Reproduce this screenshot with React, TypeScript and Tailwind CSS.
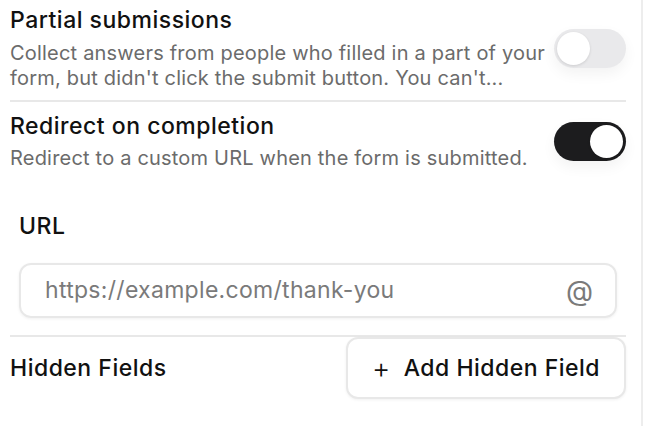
import React from "react";

function Toggle({ on }: { on: boolean }) {
  return (
    <div
      className={
        "flex h-[39px] w-[72px] shrink-0 items-center rounded-full p-[3px] shadow-[0_6px_14px_rgba(0,0,0,0.05)] " +
        (on ? "justify-end bg-[#1c1c1e]" : "justify-start bg-[#e9e9eb]")
      }
    >
      <div className="h-[33px] w-[33px] rounded-full bg-white shadow-[0_1px_3px_rgba(0,0,0,0.12)]" />
    </div>
  );
}

export default function App() {
  return (
    <div
      className="flex h-[426px] w-[646px] bg-white text-[#111111]"
      style={{ fontFamily: "Inter, 'Liberation Sans', sans-serif" }}
    >
      <div className="flex w-[643px] flex-col border-r-2 border-[#ededed] pl-[10px] pr-[15px]">
        <div className="flex items-center justify-between pt-[6px] pb-[9px]">
          <div className="flex w-[544px] flex-col gap-[7px]">
            <div className="text-[23px] font-medium leading-[28px] tracking-[0.5px]">Partial submissions</div>
            <div className="text-[20px] leading-[25px] tracking-[0.2px] text-[#6b6b6b]">
              Collect answers from people who filled in a part of your form, but didn't click the submit button. You can't...
            </div>
          </div>
          <Toggle on={false} />
        </div>
        <div className="h-[2px] bg-[#e8e8e8]" />
        <div className="flex items-center justify-between pt-[10px]">
          <div className="flex flex-col gap-[6px]">
            <div className="text-[23px] font-medium leading-[28px] tracking-[0.5px]">Redirect on completion</div>
            <div className="text-[20px] leading-[25px] tracking-[0.2px] text-[#6b6b6b]">
              Redirect to a custom URL when the form is submitted.
            </div>
          </div>
          <Toggle on={true} />
        </div>
        <div className="flex flex-col pl-[9px] pr-[9px] pt-[41px]">
          <div className="text-[23px] font-medium leading-[28px] tracking-[0.5px]">URL</div>
          <div className="mt-[23px] flex h-[55px] items-center justify-between rounded-[12px] border-2 border-[#e8e8e8] pl-[24px] pr-[22px] shadow-[0_1px_3px_rgba(0,0,0,0.06)]">
            <span className="text-[23px] tracking-[0.3px] text-[#7a7a7a]">https://example.com/thank-you</span>
            <span className="text-[28px] leading-none text-[#7a7a7a]">@</span>
          </div>
        </div>
        <div className="mt-[17px] h-[2px] bg-[#e8e8e8]" />
        <div className="flex items-center justify-between">
          <div className="text-[23px] font-medium leading-[28px] tracking-[0.5px]">Hidden Fields</div>
          <button className="flex h-[62px] w-[280px] items-center justify-center gap-[13px] rounded-[12px] border-2 border-[#e8e8e8] bg-white text-[23px] font-medium tracking-[0.5px] shadow-[0_1px_3px_rgba(0,0,0,0.06)]">
            <span className="text-[28px] font-light leading-none">+</span>
            <span>Add Hidden Field</span>
          </button>
        </div>
      </div>
      <div className="flex-1 bg-white" />
    </div>
  );
}
